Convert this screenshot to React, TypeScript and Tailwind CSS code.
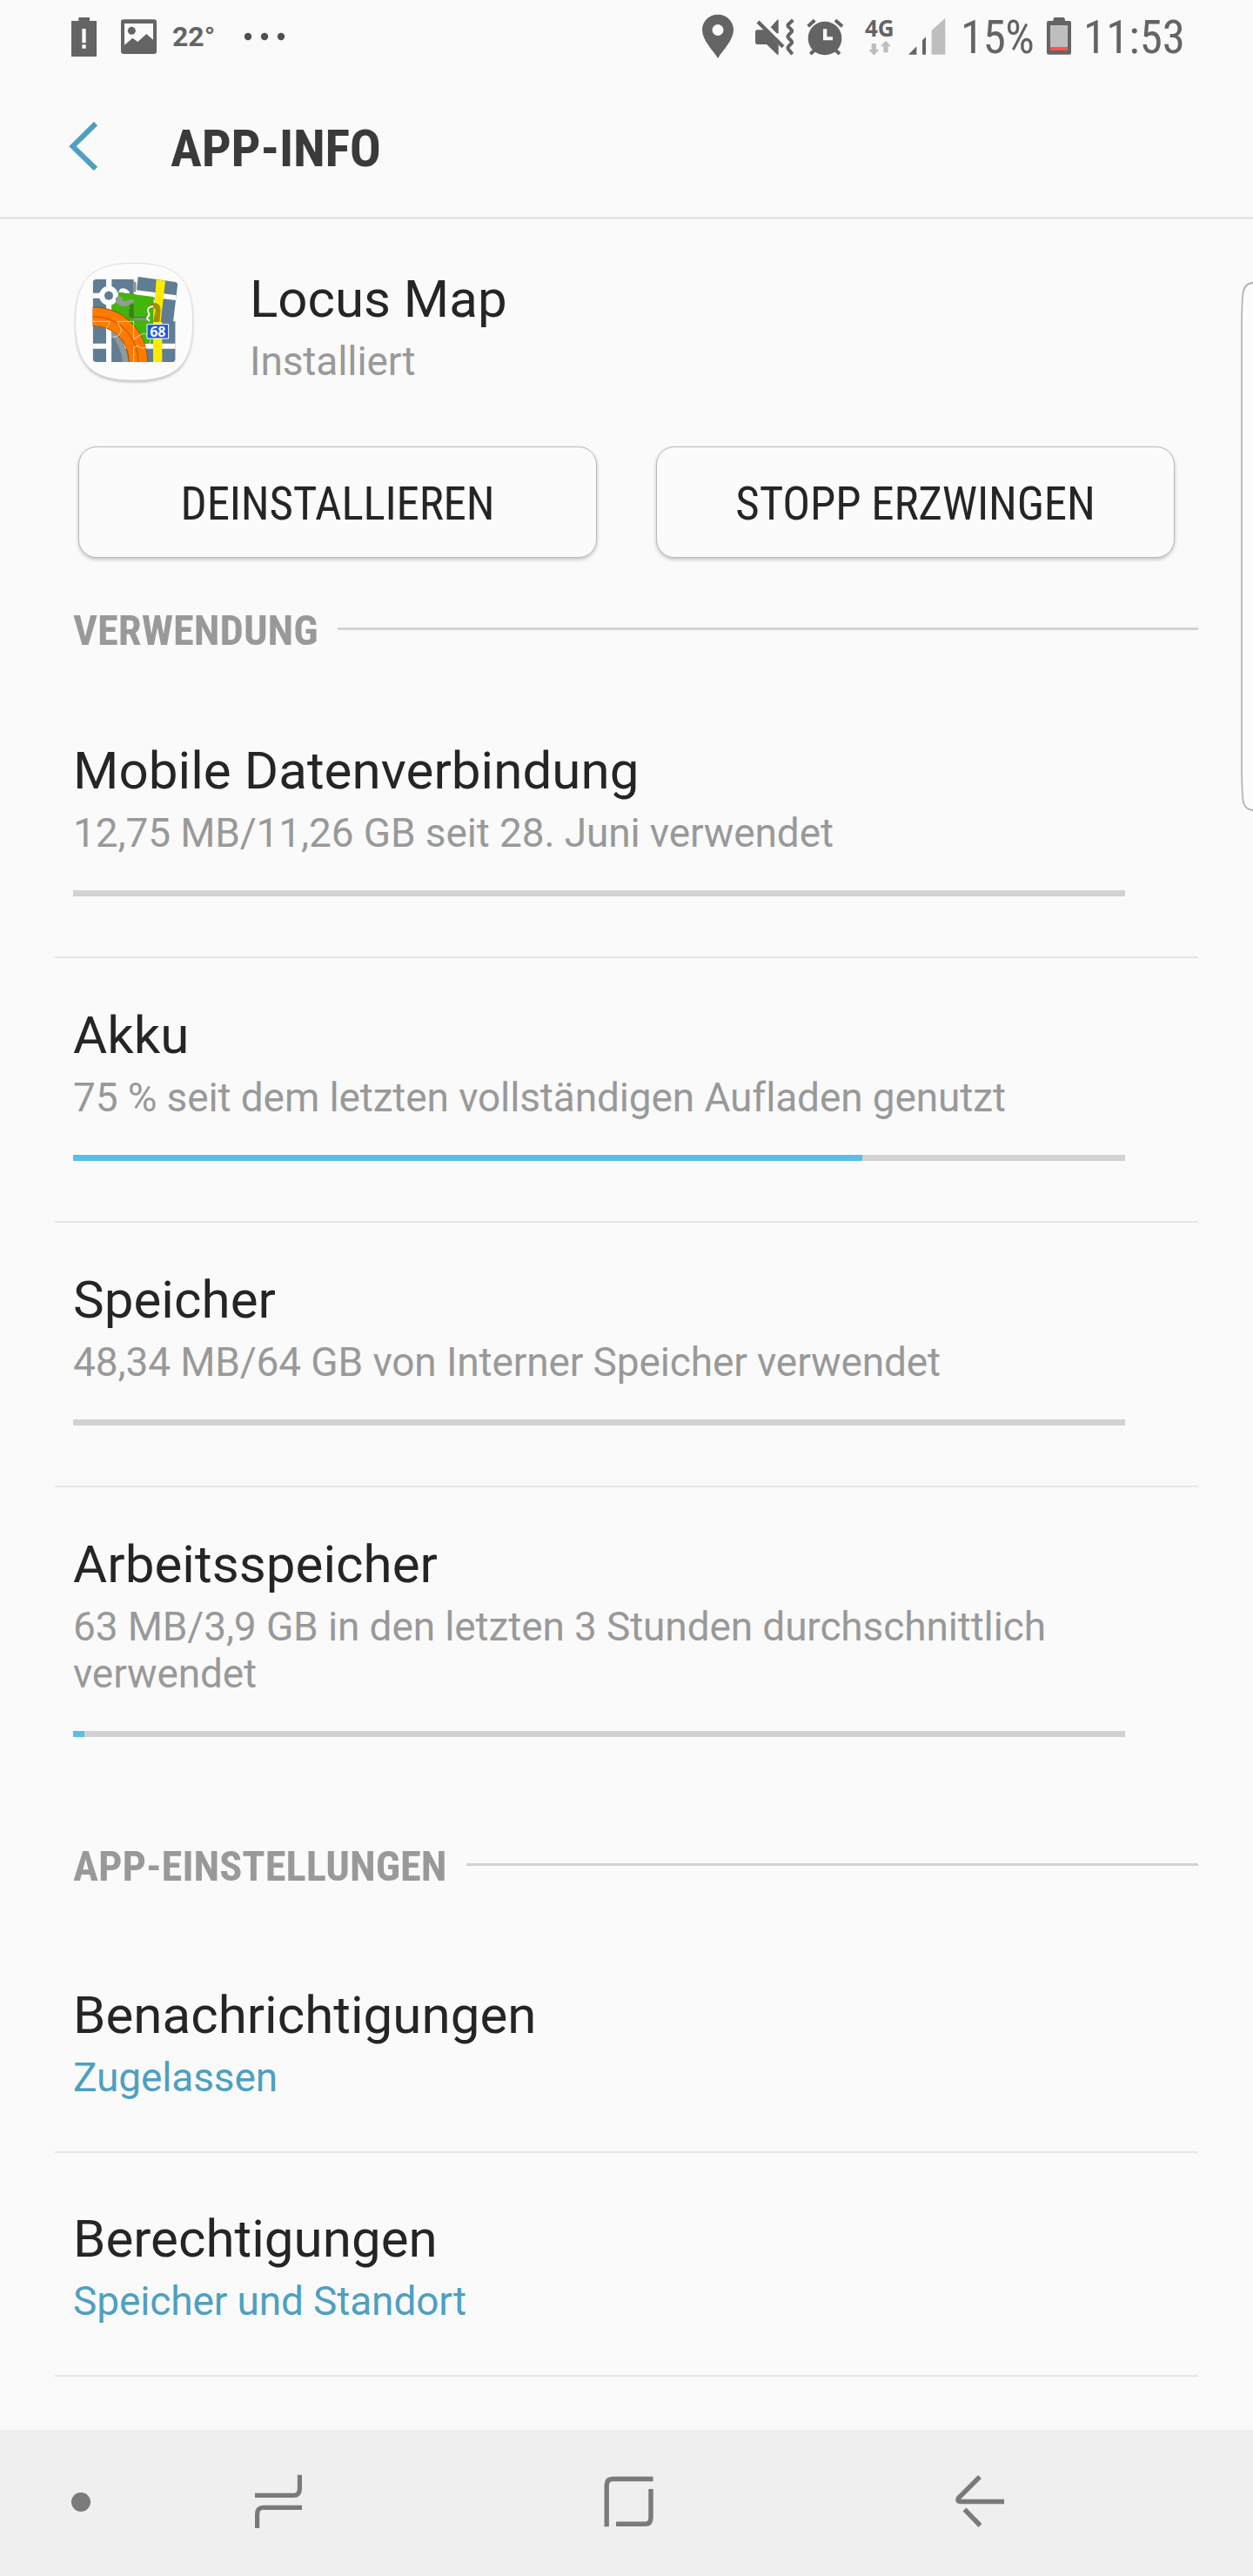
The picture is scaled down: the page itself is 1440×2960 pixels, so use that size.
import type { ReactNode } from "react";

const usage = [
  {
    title: "Mobile Datenverbindung",
    text: "12,75 MB/11,26 GB seit 28. Juni verwendet",
    value: 0,
  },
  {
    title: "Akku",
    text: "75 % seit dem letzten vollständigen Aufladen genutzt",
    value: 75,
  },
  {
    title: "Speicher",
    text: "48,34 MB/64 GB von Interner Speicher verwendet",
    value: 0,
  },
  {
    title: "Arbeitsspeicher",
    text: "63 MB/3,9 GB in den letzten 3 Stunden durchschnittlich verwendet",
    value: 1.075,
  },
];

const settings = [
  { title: "Benachrichtigungen", text: "Zugelassen" },
  { title: "Berechtigungen", text: "Speicher und Standort" },
];

const StatusBar = () => (
  <div className="flex h-[90px] shrink-0 text-[#646464]">
    <svg className="ml-[60px] h-[90px] w-[130px] shrink-0" viewBox="0 0 390 270" fill="currentColor">
      {/* battery warning */}
      <path
        fillRule="evenodd"
        d="M91 60h38v12h24v123H66V72h25zM103 99v49h13V99zM103 154v13h13v-13z"
      />
      {/* picture */}
      <path
        fillRule="evenodd"
        d="M246 67h105q9 0 9 9v101q0 9-9 9H246q-9 0-9-9V76q0-9 9-9zM249 81v74l28-24 18 13 30-27 23 20V81z"
      />
      <circle cx="274" cy="106" r="13.5" />
    </svg>
    <span className="ml-2 w-[59px] text-[32px]/[84px] font-bold">22°</span>
    <svg className="ml-6 h-[90px] w-12 shrink-0 text-[#505050]" viewBox="0 0 48 90" fill="currentColor">
      <circle cx="4" cy="42" r="4.2" />
      <circle cx="23" cy="42" r="4.2" />
      <circle cx="42" cy="42" r="4.2" />
    </svg>

    <svg className="ml-auto h-[90px] w-[200px] shrink-0" viewBox="0 0 600 270" fill="currentColor">
      {/* location */}
      <path
        fillRule="evenodd"
        d="M132 50c30 0 54 23 54 53 0 36-37 70-54 98-17-28-54-62-54-98 0-30 24-53 54-53zM132 84a19.500 19.500 0 1 0 0 39 19.500 19.500 0 1 0 0-39z"
      />
      {/* muted, vibrating */}
      <path d="M268 103h23l50 50v36l-6-2-35-34h-32q-7 0-7-7v-36q0-7 7-7zM314 94l23-26q4-2 4 2v43q-3 4-7 1z" />
      <path d="M270 75l87 86" fill="none" stroke="currentColor" strokeWidth="13" />
      <path
        d="M391 69l-17 16q-2 3 0 6l12 12q3 4 0 7l-12 13q-2 3 0 6l12 13q3 4 0 7l-12 13q-2 3 0 6l15 19"
        fill="none"
        stroke="currentColor"
        strokeWidth="12"
      />
      {/* alarm */}
      <path
        fillRule="evenodd"
        d="M501 74a58 58 0 1 0 0 116 58 58 0 1 0 0-116zM495 100v39h33v-12h-20v-27z"
      />
      <path
        d="M443 91l23-21M561 91l-24-21M465 173l-14 13M538 173l14 13"
        fill="none"
        stroke="currentColor"
        strokeWidth="12"
      />
    </svg>
    <div className="ml-[13px] flex w-9 flex-col">
      <span className="mt-[18px] h-7 font-['Open_Sans',sans-serif] text-[26px]/[28px] font-bold">4G</span>
      <svg className="ml-1 h-[18px] w-[27px]" viewBox="0 0 81 54" fill="#bdbdbd">
        <path d="M11 12h16v21h10L19 53 1 33h10zM52 43V22H41L60 2l18 20H68v21z" />
      </svg>
    </div>
    <svg className="ml-[13px] h-[90px] w-[46px] shrink-0" viewBox="0 0 138 270" fill="currentColor">
      <path d="M3 188l28-28v28zM51 188v-49l12-12v61z" />
      <path d="M83 188v-83l47-43v126z" fill="#bebebe" />
    </svg>
    <span className="ml-[15px] w-[86px] text-[53px]/[86px] tracking-[-0.5px] font-stretch-condensed">15%</span>
    <svg className="ml-[13px] h-[90px] w-7 shrink-0" viewBox="0 0 84 270" fill="currentColor">
      <path d="M28 60h29q6 0 6 12h15q6 0 6 6v104q0 6-6 6H6q-6 0-6-6V78q0-6 6-6h16q0-12 6-12z" />
      <path d="M12 87h60v75H12z" fill="#bebebe" />
      <path d="M12 162h60v12H12z" fill="#ff5252" />
    </svg>
    <span className="mr-[76px] ml-[14px] w-[119px] text-[53px]/[86px] font-stretch-condensed">11:53</span>
  </div>
);

const LocusIcon = () => (
  <svg className="ml-20 h-40 w-[150px] shrink-0" viewBox="0 0 450 480">
    <defs>
      <filter id="soft" x="-10%" y="-10%" width="120%" height="125%">
        <feGaussianBlur stdDeviation="4" />
      </filter>
      <clipPath id="tile">
        <rect x="80" y="93" width="285" height="285" rx="12" />
      </clipPath>
    </defs>
    <path
      d="M222 44C370 44 425 100 425 246S370 448 222 448 20 392 20 246 75 44 222 44z"
      fill="#bdbdbd"
      filter="url(#soft)"
    />
    <path
      d="M222 37C370 37 425 92 425 239S370 441 222 441 20 386 20 239 75 37 222 37z"
      fill="#fcfcfc"
      stroke="#dedede"
      strokeWidth="3"
    />
    <g clipPath="url(#tile)">
      <path d="M80 93h141v145h144v140H80z" fill="#607d93" />
      <path d="M126 93h19v285h-19zM80 140h80v18H80zM80 314h285v18H80z" fill="#fff" />
      <path d="M174 126q16-8 32 10v30h-50z" fill="#fff" />
      <path d="M145 175l25-38 120 16v161H145z" fill="#43b50c" />
      <path d="M145 260c30 20 50 60 58 118h-50l-8-50z" fill="#8e9a9c" />
      <path d="M145 285q32 40 38 93h-38z" fill="#607d93" />
      <circle cx="135" cy="149" r="24" fill="none" stroke="#fff" strokeWidth="18" />
      <circle cx="135" cy="149" r="15" fill="#607d93" />
      <path d="M288 230h31v148h-31z" fill="#ffeb00" />
      <path d="M70 222c94-6 168 62 167 165" fill="none" stroke="#8c4300" strokeWidth="66" />
      <path d="M70 222c94-6 168 62 167 165" fill="none" stroke="#ff7a00" strokeWidth="62" />
      <path d="M70 222c94-6 168 62 167 165" fill="none" stroke="#a84d00" strokeWidth="2.500" />
    </g>
    {/* lifted puzzle piece */}
    <path d="M236 84l128 18q9 2 8 11l-15 127h-45l-20-80-62-20z" fill="#607d93" />
    <path d="M229 130l139 18-3 17-138-17z" fill="#fff" />
    <path d="M168 138l120 15v75l-24 6q-3-12 8-20-8-28 16-34v48h-67v-67z" fill="#43b50c" />
    <path d="M299 93l31 5-16 142h-26z" fill="#ffeb00" />
    <path d="M221 101l9 2-2 34-7-2z" fill="#8a8f93" />
    <path
      d="M158 163q2-14 14-11l10 1q-2 14 8 15c12 1 12-6 20-6h11v13q-12-2-18 7-18 8-33 0-12-7-12-19z"
      fill="#939b93"
    />
    <path d="M207 182l14-6v46h45l10 12h-55v-7l-17-3z" fill="#3a6b22" opacity=".75" />
    <path d="M221 225h48l7 10h-55z" fill="#858f85" />
    <path d="M270 190q8-16 26-16 18 4 18 26l-4 40h-22l8-40q-2-12-14-10z" fill="#937f00" opacity=".85" />
    <path d="M288 186q-22 2-18 18 8 10 0 18-8 6 6 14" fill="none" stroke="#fff" strokeWidth="6" />
    <path
      d="M80 238h58q2 10-12 24 2 28 24 30 28-2 28-28-12-16-12-26h55v62q16-14 34-20 20 2 23 21 0 24-22 29-16 0-22-9l-13 7v50"
      fill="none"
      stroke="#fff"
      strokeOpacity=".65"
      strokeWidth="3"
    />
    <path d="M267 248h74v49h-74z" fill="#1c55e0" stroke="#fff" strokeWidth="3" />
    <text
      x="304"
      y="290"
      textAnchor="middle"
      fill="#fff"
      className="font-['Open_Sans',sans-serif] text-[48px] font-bold"
    >
      68
    </text>
  </svg>
);

const ActionButton = ({ children }: { children: ReactNode }) => (
  <button className="h-32 flex-1 rounded-[21px] border-[1.5px] border-[#b8b8b8] bg-[#fbfbfb] pt-[3px] text-[53px]/[62px] tracking-[-0.2px] font-stretch-condensed text-[#252525] shadow-[0_2px_4px_rgba(0,0,0,0.22)]">
    {children}
  </button>
);

const SectionTitle = ({ children }: { children: ReactNode }) => (
  <div className="mr-[63px] ml-[84px] flex items-center gap-[22px]">
    <h2 className="text-[48.5px]/[56px] font-bold font-stretch-condensed text-[#999]">{children}</h2>
    <div className="mb-[5px] h-[3px] flex-1 bg-[#d2d2d2]" />
  </div>
);

const NavBar = () => (
  <nav className="mt-auto flex h-[168px] shrink-0 items-center bg-[#efefef] text-[#7a7a7a]">
    <div className="mb-[3px] ml-[82px] size-[22px] rounded-full bg-[#7a7a7a]" />
    <svg className="mb-1 ml-[188px] size-16" viewBox="0 0 64 64" fill="none" stroke="currentColor" strokeWidth="5.2">
      <path d="M1 25.400h44.500q6.900 0 6.900-8V1.700M55 39.400H10.500q-6.900 0-6.900 8v15.700" />
    </svg>
    <svg className="mb-1 ml-[335px] size-16" viewBox="0 0 64 64" fill="none" stroke="currentColor" strokeWidth="5.400">
      <path d="M59.500 6.500H13q-6.800 0-6.800 7.500v47.300M57 18v33q0 7.300-6.500 7.300H17" />
    </svg>
    <svg
      className="mb-1 ml-[341px] size-16"
      viewBox="0 0 64 64"
      fill="none"
      stroke="currentColor"
      strokeWidth="5.400"
      strokeLinejoin="round"
    >
      <path d="M30 4L5.500 28.500q-2 4 2 4H58M12.500 41.500L30.500 60" />
    </svg>
  </nav>
);

const App = () => {
  return (
    <div className="relative flex h-[2960px] w-[1440px] flex-col overflow-hidden bg-[#fafafa] font-[Roboto,sans-serif]">
      <StatusBar />

      <header className="flex h-[162px] shrink-0 items-center border-b-[3px] border-[#e6e6e6]">
        <svg
          className="mb-[3px] ml-[79px] h-14 w-[34px]"
          viewBox="0 0 34 56"
          fill="none"
          stroke="#4ea0bf"
          strokeWidth="6"
        >
          <path d="M31 2L4.500 28.200 31 54" />
        </svg>
        <h1 className="mt-[3px] ml-[83px] text-[60px]/[70px] font-bold tracking-[-0.2px] font-stretch-condensed text-[#3a3a3a]">
          APP-INFO
        </h1>
      </header>

      <div className="mt-[38px] flex">
        <LocusIcon />
        <div className="mt-[19px] ml-[57px]">
          <p className="text-[60px]/[70px] text-[#252525]">Locus Map</p>
          <p className="mt-[9px] text-[46px]/[54px] tracking-[-0.1px] text-[#999]">Installiert</p>
        </div>
      </div>

      <div className="mt-[63px] mr-[90px] ml-[90px] flex gap-[68px]">
        <ActionButton>DEINSTALLIEREN</ActionButton>
        <ActionButton>STOPP ERZWINGEN</ActionButton>
      </div>

      <section className="mt-14">
        <SectionTitle>VERWENDUNG</SectionTitle>
        <ul className="mt-11 mr-[63px] ml-[63px]">
          {usage.map((item) => (
            <li
              key={item.title}
              className="border-b-2 border-[#e6e6e6] pt-[54px] pr-[84px] pb-[69px] pl-[21px] last:border-b-0"
            >
              <p className="text-[60px]/[70px] tracking-[0.08px] text-[#252525]">{item.title}</p>
              <p className="mt-[9px] text-[46px]/[54px] tracking-[-0.12px] text-[#999]">{item.text}</p>
              <div className="mt-[39px] h-[7px] bg-[#d2d2d2]">
                <div className="h-full bg-[#58c0e4]" style={{ width: `${item.value}%` }} />
              </div>
            </li>
          ))}
        </ul>
      </section>

      <section className="mt-[52px]">
        <SectionTitle>APP-EINSTELLUNGEN</SectionTitle>
        <ul className="mt-11 mr-[63px] ml-[63px]">
          {settings.map((item) => (
            <li key={item.title} className="border-b-2 border-[#e6e6e6] pt-16 pb-[58px] pl-[21px]">
              <p className="text-[60px]/[70px] tracking-[0.05px] text-[#252525]">{item.title}</p>
              <p className="mt-[9px] text-[46px]/[54px] tracking-[-0.12px] text-[#4ea0bf]">{item.text}</p>
            </li>
          ))}
        </ul>
      </section>

      <NavBar />

      {/* edge panel handle */}
      <svg
        className="absolute top-[323px] right-0 h-[610px] w-4"
        viewBox="0 0 16 610"
        fill="#fcfcfc"
        stroke="#b4b4b4"
        strokeWidth="1.800"
      >
        <path d="M17 2Q6 2 4.500 14 3 26 3 60v490q0 34 1.500 46Q6 608 17 608" />
      </svg>
    </div>
  );
};

export default App;
